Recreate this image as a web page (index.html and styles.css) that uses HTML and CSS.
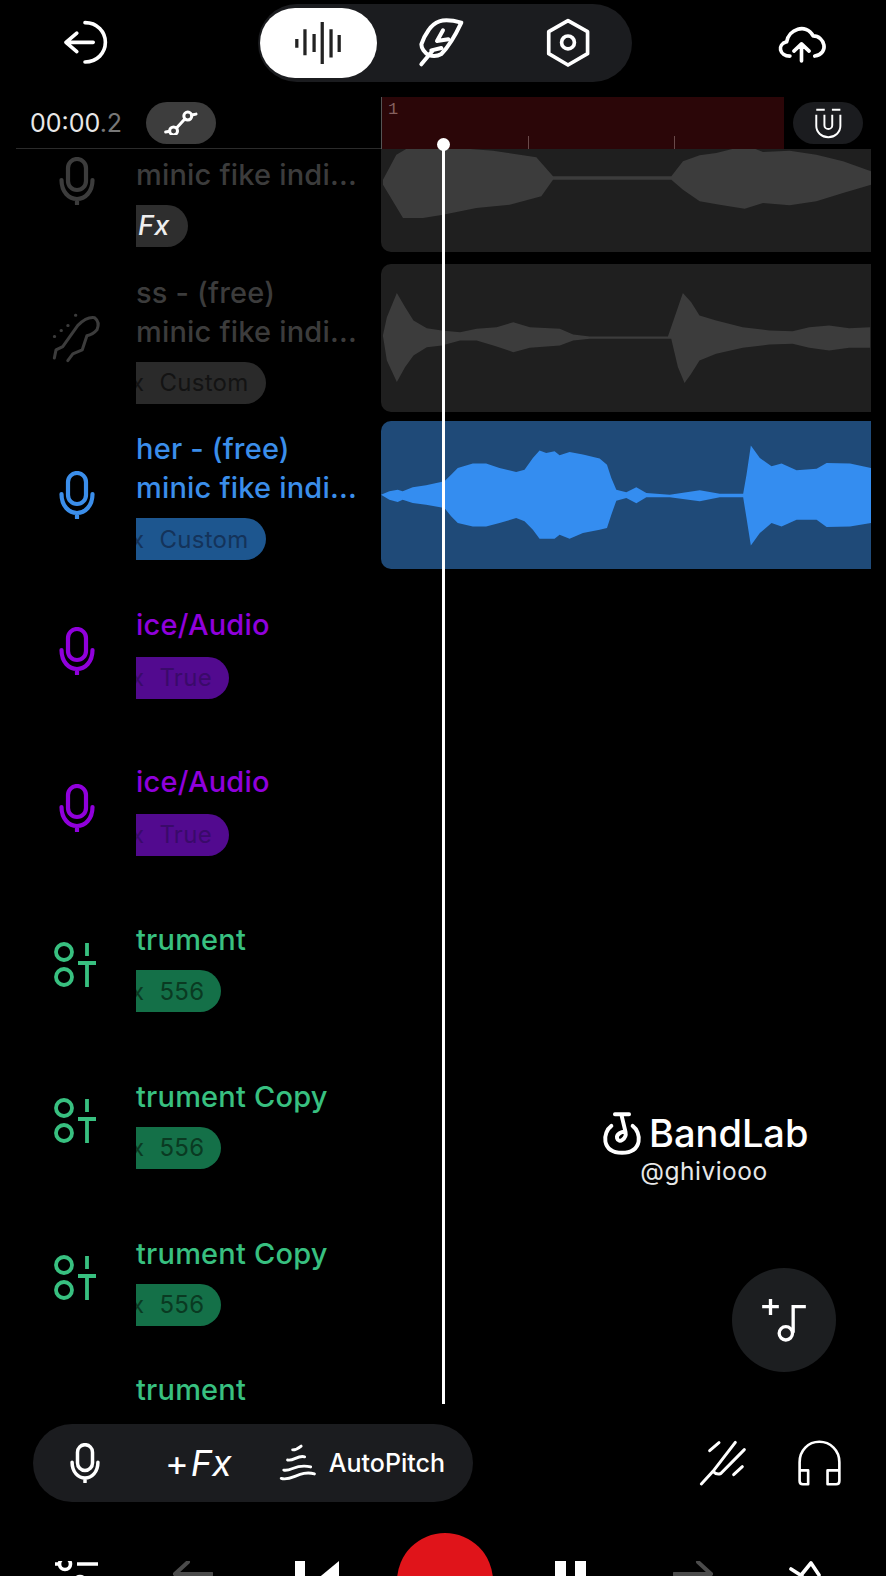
FILE: index.html
```html
<!DOCTYPE html>
<html lang="en">
<head>
    <meta charset="UTF-8">
    <meta name="viewport" content="width=device-width, initial-scale=1.0">
    <title>BandLab Studio</title>
    <link rel="stylesheet" href="styles.css">
</head>
<body>
    <!-- shared icons -->
    <svg class="defs" width="0" height="0">
        <symbol id="mic" viewBox="0 0 36 48">
            <rect x="9" y="2" width="18" height="31" rx="9" fill="none" stroke="currentColor" stroke-width="4.2"/>
            <path d="M2.5 23c0 12 7.500 19 15.500 19s15.500-7 15.500-19M18 42v5" fill="none" stroke="currentColor" stroke-width="4.2" stroke-linecap="round"/>
        </symbol>
        <symbol id="sliders" viewBox="0 0 42 46">
            <circle cx="10" cy="10" r="8" fill="none" stroke="currentColor" stroke-width="3.8"/>
            <circle cx="10" cy="35" r="8" fill="none" stroke="currentColor" stroke-width="3.8"/>
            <path d="M33 1v13M24 21h18M33 21v24" fill="none" stroke="currentColor" stroke-width="3.8"/>
        </symbol>
    </svg>

    <div class="app">
        <header class="topbar">
            <svg class="icon" width="46" height="50" viewBox="185 60 140 140" fill="none" stroke="#fff" stroke-width="11" stroke-linecap="round" stroke-linejoin="round">
                <path d="M280 128H197M230 100l-33 28 33 28M255 68c37 0 62 28 62 60s-25 60-62 60"/>
            </svg>
            <nav class="segments">
                <div class="segment selected">
                    <svg width="50" height="44" viewBox="880 60 150 135" fill="none" stroke="#222" stroke-width="10">
                        <path d="M890 115v27M915 85v80M943 100v55M968 63v129M995 85v87M1020 103v52"/>
                    </svg>
                </div>
                <div class="segment">
                    <svg width="90" height="75" viewBox="0 0 270 225" fill="none" stroke="#fff" stroke-width="12" stroke-linecap="round" stroke-linejoin="round">
                        <path d="M190 50c-22-6-48-10-66-4-14 5-24 14-32 26-10 14-18 30-22 43 0 12 10 26 22 32 14 5 26 4 38-3 24-24 44-60 60-94ZM70 175l35-42M135 73l-18 32 34-5M100 133l30-7"/>
                    </svg>
                </div>
                <div class="segment">
                    <svg width="46" height="52" viewBox="300 45 150 170" fill="none" stroke="#fff" stroke-width="12" stroke-linejoin="round">
                        <path d="M375 57l64 36v72l-64 37-63-37V93Z"/>
                        <circle cx="375" cy="128" r="21"/>
                    </svg>
                </div>
            </nav>
            <svg class="icon" width="53" height="43" viewBox="995 60 160 130" fill="none" stroke="#fff" stroke-width="11" stroke-linecap="round" stroke-linejoin="round">
                <path d="M1040 163c-32 0-40-35-10-43 6-38 58-58 80-18 36 0 50 54 5 61M1075 178v-52M1052 148l23-22 23 22"/>
            </svg>
        </header>

        <div class="timeline">
            <div class="timeline-left">
                <span class="time">00:00<span class="time-dim">.2</span></span>
                <span class="round-btn grey">
                    <svg width="38" height="25" viewBox="485 330 115 75" fill="none" stroke="#fff" stroke-width="9" stroke-linecap="round">
                        <circle cx="520" cy="393" r="12"/>
                        <circle cx="563" cy="348" r="12"/>
                        <path d="M496 396l12-2M529 384l25-27M575 345l13-3"/>
                    </svg>
                </span>
            </div>
            <div class="ruler">
                <span class="bar-number">1</span>
                <i class="tick tick-a"></i>
                <i class="tick tick-b"></i>
            </div>
            <span class="round-btn dark">
                <svg width="28" height="33" viewBox="1110 322 86 100" fill="none" stroke="#fff" stroke-width="6">
                    <path d="M1117 330h26M1165 330h26M1117 345v35a37 34 0 0 0 74 0v-35M1142 345v32a12 12 0 0 0 24 0v-32"/>
                </svg>
            </span>
        </div>

        <main class="tracks">
            <section class="track grey-track first">
                <div class="track-icon"><svg width="36" height="48"><use href="#mic"/></svg></div>
                <div class="track-info">
                    <p class="track-name">&nbsp;</p>
                    <p class="track-name">minic fike indi...</p>
                    <span class="pill fx-pill">Fx</span>
                </div>
                <div class="clip short">
                    <svg width="490" height="105" viewBox="-186 447 1470 315">
                        <path d="M-180 545L-140 470L-100 447L0 447L150 458L280 478L330 535L685 535L720 490L770 472L820 465L880 450L930 450L960 462L1040 458L1120 470L1200 490L1284 520L1284 560L1200 585L1120 610L1040 622L960 615L905 632L830 620L770 610L720 575L685 545L330 545L295 595L200 620L100 630L0 650L-60 660L-120 660L-180 560Z"/>
                    </svg>
                </div>
            </section>

            <section class="track grey-track">
                <div class="track-icon">
                    <svg width="52" height="52" viewBox="155 155 155 155" fill="none" stroke="currentColor" stroke-width="9" stroke-linecap="round" stroke-linejoin="round">
                        <path d="M165 292L170 268L190 258L235 195Q262 168 285 172Q302 185 292 208Q280 222 262 226L248 268L220 280L205 300"/>
                        <path d="M165 228h1M185 210h1M205 195h1M228 165h1"/>
                    </svg>
                </div>
                <div class="track-info">
                    <p class="track-name">ss - (free)</p>
                    <p class="track-name">minic fike indi...</p>
                    <span class="pill"><span class="pill-x">x</span>Custom</span>
                </div>
                <div class="clip">
                    <svg width="490" height="148" viewBox="35 10 1468 445">
                        <path d="M38 225L50 170L80 97L105 140L130 180L170 203L215 210L270 215L320 205L380 200L430 185L480 200L570 205L610 222L660 228L895 228L915 170L940 97L965 125L990 165L1040 180L1120 200L1200 210L1270 212L1320 200L1380 195L1440 203L1503 200L1503 262L1440 262L1380 270L1320 262L1270 250L1200 252L1120 262L1040 280L990 300L965 340L945 368L925 320L905 235L660 235L610 240L570 255L480 262L430 275L380 258L320 240L270 240L215 255L170 260L130 285L105 320L80 365L50 300Z"/>
                    </svg>
                </div>
            </section>

            <section class="track blue-track">
                <div class="track-icon"><svg width="36" height="48"><use href="#mic"/></svg></div>
                <div class="track-info">
                    <p class="track-name">her - (free)</p>
                    <p class="track-name">minic fike indi...</p>
                    <span class="pill"><span class="pill-x">x</span>Custom</span>
                </div>
                <div class="clip">
                    <svg width="490" height="148" viewBox="35 480 1468 442">
                        <path d="M35 700L60 690L85 685L100 690L130 678L170 672L225 660L245 640L265 620L310 607L350 607L390 620L440 632L465 625L490 590L510 568L530 575L555 570L570 582L600 572L640 580L690 592L712 610L725 650L740 685L770 693L800 678L830 695L900 700L990 687L1050 697L1120 697L1130 640L1143 553L1170 590L1205 615L1235 607L1280 627L1340 622L1370 605L1440 607L1503 620L1503 785L1440 795L1370 797L1340 775L1280 775L1235 795L1205 785L1170 815L1143 852L1130 770L1120 708L1050 708L990 720L900 708L830 708L800 726L770 710L740 718L725 760L712 800L690 805L640 815L600 832L570 820L555 832L510 832L490 805L465 780L440 770L390 785L350 795L310 795L265 785L245 765L225 740L170 730L130 725L100 715L85 722L60 715Z"/>
                    </svg>
                </div>
            </section>

            <section class="track purple-track">
                <div class="track-icon"><svg width="36" height="48"><use href="#mic"/></svg></div>
                <div class="track-info single">
                    <p class="track-name">ice/Audio</p>
                    <span class="pill"><span class="pill-x">x</span>True</span>
                </div>
            </section>

            <section class="track purple-track">
                <div class="track-icon"><svg width="36" height="48"><use href="#mic"/></svg></div>
                <div class="track-info single">
                    <p class="track-name">ice/Audio</p>
                    <span class="pill"><span class="pill-x">x</span>True</span>
                </div>
            </section>

            <section class="track green-track">
                <div class="track-icon"><svg class="sliders" width="42" height="46"><use href="#sliders"/></svg></div>
                <div class="track-info single">
                    <p class="track-name">trument</p>
                    <span class="pill"><span class="pill-x">x</span>556</span>
                </div>
            </section>

            <section class="track green-track">
                <div class="track-icon"><svg class="sliders" width="42" height="46"><use href="#sliders"/></svg></div>
                <div class="track-info single">
                    <p class="track-name">trument Copy</p>
                    <span class="pill"><span class="pill-x">x</span>556</span>
                </div>
            </section>

            <section class="track green-track">
                <div class="track-icon"><svg class="sliders" width="42" height="46"><use href="#sliders"/></svg></div>
                <div class="track-info single">
                    <p class="track-name">trument Copy</p>
                    <span class="pill"><span class="pill-x">x</span>556</span>
                </div>
            </section>

            <section class="track green-track last">
                <div class="track-icon"></div>
                <div class="track-info">
                    <p class="track-name">trument</p>
                </div>
            </section>
        </main>

        <div class="playhead"></div>

        <div class="watermark">
            <div class="watermark-brand">
                <svg width="46" height="46" viewBox="115 60 130 130" fill="none" stroke="#fff" stroke-width="11" stroke-linecap="round" stroke-linejoin="round">
                    <path d="M150 105c-25 18-30 75 30 76 60-1 55-58 30-76"/>
                    <path d="M160 72h40M178 72l12 50c4 20-20 34-24 18-3-12 14-20 24-18"/>
                </svg>
                <span>BandLab</span>
            </div>
            <div class="watermark-user">@ghiviooo</div>
        </div>

        <button class="fab">
            <svg width="52" height="50" viewBox="595 615 155 150" fill="none" stroke="#fff" stroke-width="10">
                <path d="M607 650h50M632 627v48M738 650h-38v78"/>
                <circle cx="678" cy="730" r="20"/>
            </svg>
        </button>

        <div class="toolbar">
            <div class="tools">
                <svg class="tool-mic" width="30" height="40"><use href="#mic"/></svg>
                <span class="add-fx">+<em>Fx</em></span>
                <span class="autopitch">
                    <svg width="38" height="42" viewBox="835 125 120 125" fill="none" stroke="#fff" stroke-width="9" stroke-linecap="round">
                        <path d="M878 146c12 0 20-6 27-12M862 178c20 4 32-16 54-10M850 210c25 5 38-22 85-10M842 236c30 12 60-28 105-14"/>
                    </svg>
                    AutoPitch
                </span>
            </div>
            <div class="toolbar-right">
                <svg width="50" height="50" viewBox="770 120 150 150" fill="none" stroke="#fff" stroke-width="9" stroke-linecap="round">
                    <path d="M783 258L818 220L885 133M818 220Q830 232 842 226L912 155M808 158l28-24M880 230l26-24"/>
                </svg>
                <svg width="46" height="48" viewBox="1065 115 140 145" fill="none" stroke="#fff" stroke-width="8" stroke-linejoin="round">
                    <path d="M1076 215v-30c0-36 26-62 60-62s61 26 61 62v30M1076 210h26v42h-16c-6 0-10-4-10-10ZM1197 210h-36v42h26c6 0 10-4 10-10Z"/>
                </svg>
            </div>
        </div>

        <div class="transport">
            <svg class="transport-icon" width="44" height="30" viewBox="55 1561 44 30" fill="none" stroke="#fff" stroke-width="3.6">
                <path d="M55 1564h4M77 1564h21"/>
                <circle cx="65" cy="1564" r="5.5"/>
                <circle cx="80" cy="1582" r="5.5"/>
            </svg>
            <svg class="transport-icon" width="40" height="30" viewBox="173 1561 40 30" fill="none" stroke="#4b4b4b" stroke-width="4" stroke-linecap="round">
                <path d="M188 1562l-13 12 13 12M176 1574h36"/>
            </svg>
            <svg class="transport-icon" width="44" height="30" viewBox="0 0 44 30" fill="#fff">
                <rect width="10" height="30"/>
                <path d="M44 0v30H15V24Z"/>
            </svg>
            <div class="record"></div>
            <svg class="transport-icon" width="31" height="30" viewBox="0 0 31 30" fill="#fff">
                <rect width="11" height="30"/>
                <rect x="20" width="11" height="30"/>
            </svg>
            <svg class="transport-icon" width="40" height="30" viewBox="673 1561 40 30" fill="none" stroke="#4b4b4b" stroke-width="4" stroke-linecap="round">
                <path d="M698 1562l13 12-13 12M710 1574h-36"/>
            </svg>
            <svg class="transport-icon" width="34" height="30" viewBox="790 1561 34 30" fill="none" stroke="#fff" stroke-width="3.6" stroke-linecap="round" stroke-linejoin="round">
                <path d="M792 1569l11 7M803 1574l9-11 8 12"/>
            </svg>
        </div>
    </div>
</body>
</html>
```

FILE: styles.css
```css
* {
    box-sizing: border-box;
}

body {
    margin: 0;
    background-color: #000;
    font-family: "Inter", "Noto Sans", sans-serif;
    color: #fff;
    overflow: hidden;
}

.defs {
    position: absolute;
}

.app {
    position: relative;
    width: 886px;
    height: 1576px;
    overflow: hidden;
}

svg {
    display: block;
}

/* top bar */
.topbar {
    height: 97px;
    padding: 4px 58px 15px 62px;
    display: flex;
    align-items: center;
    justify-content: space-between;
}

.segments {
    width: 374px;
    height: 78px;
    margin-left: 6px;
    padding: 4px 5px 4px 2px;
    display: flex;
    gap: 8px;
    background-color: #1b1c1f;
    border-radius: 39px;
}

.segment {
    flex: 1;
    display: flex;
    align-items: center;
    justify-content: center;
    border-radius: 35px;
}

.segment.selected {
    background-color: #fff;
}

/* timeline header */
.timeline {
    height: 52px;
    display: flex;
    align-items: flex-start;
}

.timeline-left {
    width: 365px;
    height: 52px;
    margin-left: 16px;
    padding: 5px 0 5px 14px;
    display: flex;
    align-items: center;
    border-bottom: 1px solid #2b2b2b;
}

.time {
    width: 116px;
    font-size: 25px;
    color: #e8e8e8;
}

.time-dim {
    color: #777;
}

.round-btn {
    height: 42px;
    width: 70px;
    display: flex;
    align-items: center;
    justify-content: center;
    border-radius: 21px;
}

.round-btn.grey {
    background-color: #3d3d3d;
}

.round-btn.dark {
    margin: 5px 0 0 9px;
    background-color: #1b1c1f;
}

.ruler {
    position: relative;
    width: 403px;
    height: 52px;
    background-color: #2b0608;
    border-left: 1px solid #555;
}

.bar-number {
    position: absolute;
    left: 6px;
    top: 3px;
    font-family: "Liberation Mono", monospace;
    font-size: 17px;
    color: #85605f;
}

.tick {
    position: absolute;
    top: 39px;
    width: 1px;
    height: 13px;
    background-color: #6a4a4a;
}

.tick-a {
    left: 146px;
}

.tick-b {
    left: 292px;
}

/* tracks */
.tracks {
    height: 1255px;
    overflow: hidden;
}

.track {
    height: 156.7px;
    display: grid;
    grid-template-columns: 136px 245px 490px;
    align-items: start;
}

.track.first {
    margin-top: -41.7px;
}

.track-icon {
    height: 148px;
    display: flex;
    align-items: center;
    justify-content: center;
    padding-left: 17px;
}

.sliders {
    margin-left: -3px;
}

.track-info {
    height: 148px;
    display: flex;
    flex-direction: column;
    justify-content: center;
    align-items: flex-start;
}

.track-info.single {
    padding-top: 3px;
}

.track.last .track-info {
    justify-content: flex-start;
    padding-top: 9px;
}

.track-name {
    margin: 0;
    height: 39px;
    line-height: 39px;
    font-size: 29px;
    font-weight: 500;
    letter-spacing: 0.2px;
    white-space: nowrap;
}

.pill {
    height: 42px;
    margin-top: 11px;
    padding-right: 17px;
    display: inline-flex;
    align-items: center;
    overflow: hidden;
    font-size: 24px;
    letter-spacing: 0.3px;
    border-radius: 0 21px 21px 0;
}

.pill-x {
    margin-left: -5px;
    margin-right: 15px;
}

.clip {
    height: 148px;
    overflow: hidden;
    border-radius: 10px 0 0 10px;
}

.clip.short {
    height: 145px;
    display: flex;
    align-items: flex-end;
}

.grey-track .track-icon,
.grey-track .track-name {
    color: #3c3c3c;
}

.grey-track .pill {
    background-color: #2a2a2a;
    color: #131313;
}

.grey-track .fx-pill {
    padding: 0 18px 0 2px;
    font-size: 27px;
    font-weight: 500;
    font-style: italic;
    color: #eee;
    background-color: #2e2e2e;
}

.grey-track .clip {
    background-color: #1f1f1f;
    fill: #3c3c3c;
}

.blue-track .track-icon,
.blue-track .track-name {
    color: #3b8eea;
}

.blue-track .pill {
    background-color: #1d568f;
    color: #14335a;
}

.blue-track .clip {
    background-color: #1f4a78;
    fill: #348df0;
}

.purple-track .track-icon,
.purple-track .track-name {
    color: #9000dc;
}

.purple-track .track-name {
    margin: -2px 0 2px;
}

.purple-track .pill {
    background-color: #520a8f;
    color: #3a0a6a;
}

.green-track .track-icon,
.green-track .track-name {
    color: #38c080;
}

.green-track .pill {
    background-color: #147048;
    color: #0a3a22;
}

/* things lying over the tracks */
.playhead {
    position: absolute;
    left: 442px;
    top: 146px;
    width: 3px;
    height: 1258px;
    background-color: #fff;
}

.playhead::before {
    content: "";
    position: absolute;
    left: -5px;
    top: -8px;
    width: 13px;
    height: 13px;
    border-radius: 50%;
    background-color: #fff;
}

.watermark {
    position: absolute;
    left: 599px;
    top: 1110px;
    width: 210px;
    text-align: center;
}

.watermark-brand {
    display: flex;
    align-items: center;
    gap: 4px;
    font-size: 38px;
    font-weight: 500;
    line-height: 44px;
}

.watermark-user {
    margin-top: 2px;
    font-size: 24.5px;
    line-height: 26px;
    letter-spacing: 0.5px;
    color: #e8e8e8;
}

.fab {
    position: absolute;
    left: 732px;
    top: 1268px;
    width: 104px;
    height: 104px;
    padding: 0;
    display: flex;
    align-items: center;
    justify-content: center;
    background-color: #1c1e20;
    border: none;
    border-radius: 50%;
}

/* bottom toolbar */
.toolbar {
    height: 98px;
    padding: 20px 44px 0 33px;
    display: flex;
    align-items: center;
    justify-content: space-between;
}

.tools {
    width: 440px;
    height: 78px;
    padding: 0 28px 0 37px;
    display: flex;
    align-items: center;
    justify-content: space-between;
    background-color: #1b1c1f;
    border-radius: 39px;
}

.add-fx {
    font-size: 36px;
    margin-left: 18px;
}

.add-fx em {
    margin-left: 2px;
}

.autopitch {
    display: flex;
    align-items: center;
    gap: 12px;
    font-size: 25px;
    font-weight: 500;
}

.toolbar-right {
    display: flex;
    align-items: center;
    gap: 49px;
}

.transport {
    height: 43px;
    margin-top: 31px;
    padding-left: 18px;
    display: grid;
    grid-template-columns: 117px 116px 132px 124px 126px 120px 106px;
    justify-items: center;
    align-items: start;
    overflow: hidden;
}

.transport-icon {
    margin-top: 28px;
}

.record {
    width: 96px;
    height: 96px;
    border-radius: 50%;
    background-color: #e0141a;
}
```
